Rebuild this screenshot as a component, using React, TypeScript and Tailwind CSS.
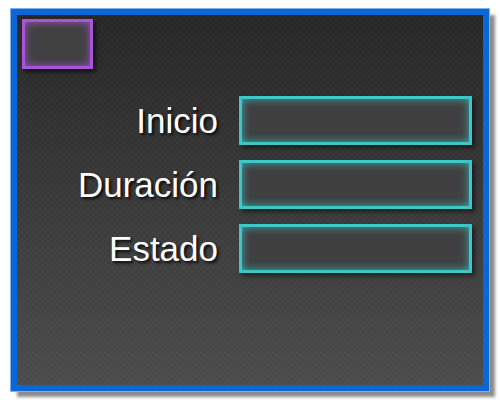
export default function App() {
  const rows = ["Inicio", "Duración", "Estado"];
  return (
    <div className="w-[500px] h-[400px] bg-white pt-[9px] pl-[11px]" style={{ fontFamily: '"Liberation Sans", Arial, sans-serif' }}>
      <div className="w-[478px] h-[382px] border-[6px] border-[#0b67d6] shadow-[0_0_0_1px_#7fb2ee,6px_6px_3px_rgba(0,0,0,0.45)]">
        <div className="w-full h-full pl-[5px] pt-[4px] pr-[11px] bg-[image:repeating-conic-gradient(rgba(255,255,255,0.025)_0_25%,transparent_0_50%),linear-gradient(to_bottom,#262626,#4b4b4b)] bg-[length:6px_6px,100%_100%]">
          <div className="w-[71px] h-[50px] border-[3px] border-[#a855d8] bg-[#414141] shadow-[inset_0_0_8px_rgba(168,85,216,0.85),3px_3px_4px_rgba(0,0,0,0.6)]" />
          <div className="mt-[27px] flex flex-col gap-[15px]">
            {rows.map((r) => (
              <div key={r} className="flex items-center justify-end gap-[21px]">
                <span className="text-[35px] leading-none text-white [text-shadow:2px_2px_3px_rgba(0,0,0,0.85)]">{r}</span>
                <div className="w-[233px] h-[49px] border-[3px] border-[#3ec7ca] bg-[#404040] shadow-[inset_0_0_8px_rgba(62,199,202,0.8),3px_3px_4px_rgba(0,0,0,0.5)]" />
              </div>
            ))}
          </div>
        </div>
      </div>
    </div>
  );
}
